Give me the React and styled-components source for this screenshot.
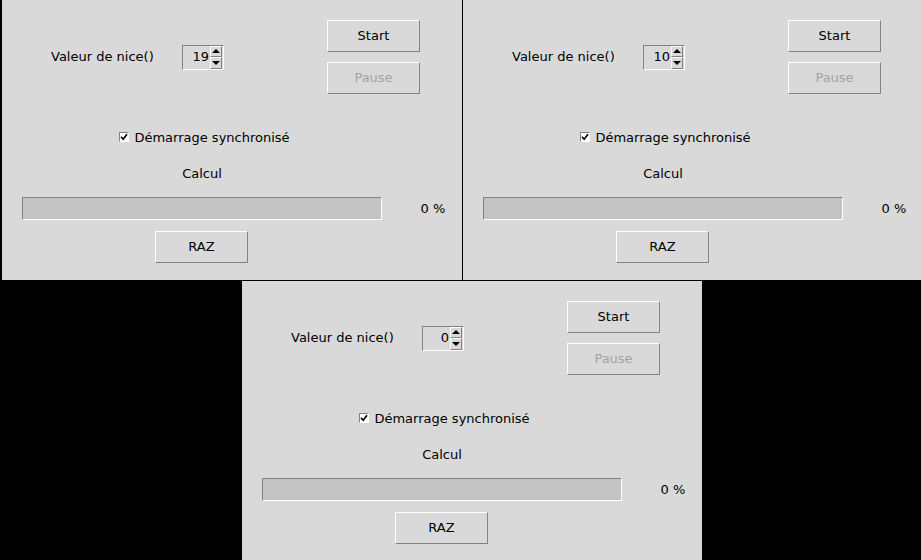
import React from 'react';
import styled, { createGlobalStyle } from 'styled-components';

const Global = createGlobalStyle`
  html, body { margin: 0; padding: 0; background: #000; }
  body { width: 921px; height: 560px; overflow: hidden; font-family: "DejaVu Sans", sans-serif; }
`;

const Desktop = styled.div`
  width: 921px;
  height: 560px;
  overflow: hidden;
  background: #000;
  display: flex;
  flex-direction: column;
  gap: 1px;
`;

const DeskRow = styled.div`
  display: flex;
  gap: 1px;
  padding-left: ${(p) => p.$indent}px;
`;

const Window = styled.div`
  flex: 0 0 460px;
  width: 460px;
  height: 280px;
  background: #d9d9d9;
  font: 13px "DejaVu Sans", sans-serif;
  color: #000;
  display: flex;
  flex-direction: column;
`;

const Top = styled.div`
  display: grid;
  grid-template-columns: 180px 42px 103px 93px;
  align-items: center;
  padding-top: 20px;
  height: 74px;
`;

const Label = styled.span`
  padding-left: 49px;
  padding-bottom: 2px;
  white-space: nowrap;
`;

const Spin = styled.div`
  width: 42px;
  height: 25px;
  box-sizing: border-box;
  border: 1px solid;
  border-color: #828282 #fff #fff #828282;
  display: flex;
`;

const SpinValue = styled.span`
  flex: 1;
  text-align: right;
  line-height: 21px;
  padding-right: 1px;
`;

const Arrows = styled.div`
  width: 12px;
  display: flex;
  flex-direction: column;
  padding: 0 1px 0 0;
`;

const ArrowBtn = styled.div`
  flex: 1;
  box-sizing: border-box;
  border: 1px solid;
  border-color: #fff #828282 #828282 #fff;
  display: flex;
  align-items: center;
  justify-content: center;
`;

const Tri = styled.span`
  width: 0;
  height: 0;
  border-left: 4px solid transparent;
  border-right: 4px solid transparent;
  ${(p) => (p.$down ? 'border-top: 4px solid #000;' : 'border-bottom: 4px solid #000;')}
`;

const BtnCol = styled.div`
  grid-column: 4;
  display: flex;
  flex-direction: column;
  gap: 10px;
`;

const Btn = styled.button`
  width: 93px;
  height: 32px;
  box-sizing: border-box;
  margin: 0 ${(p) => (p.$nudge ? '1px' : '0')} 0 0;
  padding: 0 0 2px 0;
  background: #d9d9d9;
  border: 1px solid;
  border-color: #fff #828282 #828282 #fff;
  font: 13px "DejaVu Sans", sans-serif;
  color: ${(p) => (p.disabled ? '#a3a3a3' : '#000')};
  justify-self: center;
`;

const Line = styled.div`
  display: grid;
  grid-template-columns: 400px 60px;
  align-items: center;
  margin-top: ${(p) => p.$mt}px;
  height: ${(p) => p.$h}px;
`;

const Check = styled.label`
  justify-self: center;
  padding-left: 5px;
  display: flex;
  align-items: center;
  gap: 5px;
  white-space: nowrap;
`;

const Box = styled.span`
  width: 10px;
  height: 10px;
  box-sizing: border-box;
  background: #fff;
  border: 1px solid;
  border-color: #828282 #fff #fff #828282;
  display: flex;
  align-items: center;
  justify-content: center;
`;

const Centered = styled.span`
  justify-self: center;
`;

const Bar = styled.div`
  margin: 0 20px;
  height: 23px;
  box-sizing: border-box;
  border: 1px solid;
  border-color: #828282 #fff #fff #828282;
  background: #c3c3c3;
`;

const Percent = styled.span`
  justify-self: center;
  padding-left: 2px;
`;

function Panel({ value }) {
  return (
    <Window>
      <Top>
        <Label>Valeur de nice()</Label>
        <Spin>
          <SpinValue>{value}</SpinValue>
          <Arrows>
            <ArrowBtn><Tri /></ArrowBtn>
            <ArrowBtn><Tri $down /></ArrowBtn>
          </Arrows>
        </Spin>
        <BtnCol>
          <Btn>Start</Btn>
          <Btn disabled>Pause</Btn>
        </BtnCol>
      </Top>
      <Line $mt={33} $h={20}>
        <Check>
          <Box>
            <svg width="8" height="8" viewBox="0 0 8 8">
              <path d="M1 3.8 L3.2 6.2 L7 1.2" fill="none" stroke="#000" strokeWidth="1.7" />
            </svg>
          </Box>
          Démarrage synchronisé
        </Check>
      </Line>
      <Line $mt={16} $h={20}>
        <Centered>Calcul</Centered>
      </Line>
      <Line $mt={14} $h={23}>
        <Bar />
        <Percent>0 %</Percent>
      </Line>
      <Line $mt={11} $h={32}>
        <Btn $nudge>RAZ</Btn>
      </Line>
    </Window>
  );
}

export default function App() {
  return (
    <>
      <Global />
      <Desktop>
        <DeskRow $indent={2}>
          <Panel value={19} />
          <Panel value={10} />
        </DeskRow>
        <DeskRow $indent={242}>
          <Panel value={0} />
        </DeskRow>
      </Desktop>
    </>
  );
}
